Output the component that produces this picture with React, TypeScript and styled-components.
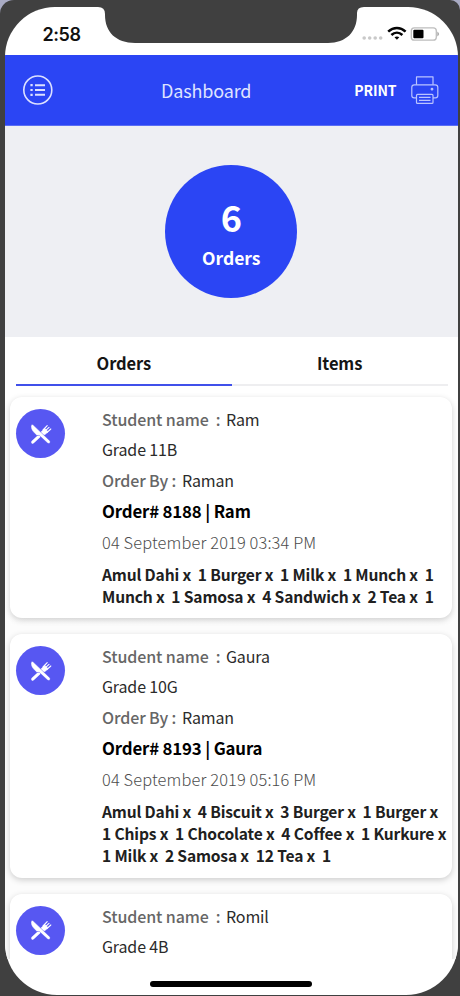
import React from "react";
import styled, { createGlobalStyle } from "styled-components";

const GlobalStyle = createGlobalStyle`
  * { box-sizing: border-box; }
  html, body { margin: 0; padding: 0; }
  body {
    width: 460px;
    height: 996px;
    overflow: hidden;
    background: #a9abc4;
    font-family: "Noto Sans CJK SC", "Noto Sans", sans-serif;
    color: #1c1c1c;
  }
`;

const Device = styled.div`
  position: relative;
  width: 460px;
  height: 996px;
  padding: 7px 2.5px 1px 5px;
  background: #404040;
  border-radius: 14px 10px 0 0;
`;

const Screen = styled.main`
  height: 988px;
  display: flex;
  flex-direction: column;
  overflow: hidden;
  background: #fff;
  border-radius: 50px 50px 52px 52px;
`;

const Notch = styled.svg`
  position: absolute;
  left: 98px;
  top: 5px;
  display: block;
`;

const HomeIndicator = styled.div`
  position: absolute;
  left: 150px;
  bottom: 9px;
  width: 162px;
  height: 6px;
  border-radius: 3px;
  background: #000;
`;

const StatusBar = styled.div`
  flex: none;
  height: 48px;
  display: flex;
  align-items: center;
  justify-content: space-between;
  padding: 6px 18px 0 37.5px;
`;

const Clock = styled.span`
  margin-top: 1px;
  font: 600 18px/22px Inter, "Liberation Sans", sans-serif;
  letter-spacing: -0.45px;
  color: #111;
`;

const StatusIcons = styled.div`
  display: flex;
  align-items: center;
`;

const Header = styled.header`
  flex: none;
  height: 71px;
  display: grid;
  grid-template-columns: 139px 1fr auto;
  align-items: center;
  padding: 0 19px 0 17px;
  background: #2b45f4;
  border-bottom: 1px solid #5a6ef4;
  color: #fff;
`;

const Title = styled.h1`
  margin: 0;
  font-size: 18px;
  font-weight: 400;
  line-height: 26px;
  letter-spacing: -0.15px;
  color: #dfe3ff;
`;

const IconButton = styled.button`
  display: flex;
  width: 32px;
  padding: 0;
  border: 0;
  background: none;
`;

const PrintButton = styled.button`
  display: flex;
  align-items: center;
  gap: 14px;
  padding: 0;
  border: 0;
  background: none;
  color: #fff;
  font: 700 14px/20px "Noto Sans CJK SC", sans-serif;
  letter-spacing: -0.1px;
`;

const Summary = styled.section`
  flex: none;
  height: 211px;
  display: flex;
  align-items: center;
  justify-content: center;
  padding-bottom: 1px;
  background: #eeeff3;
`;

const Badge = styled.div`
  width: 132px;
  height: 133px;
  display: flex;
  flex-direction: column;
  align-items: center;
  padding-top: 28px;
  border-radius: 50%;
  background: #2b45f4;
  color: #fff;
  font-weight: 700;
`;

const Count = styled.span`
  font-size: 36px;
  line-height: 46px;
`;

const CountLabel = styled.span`
  margin-top: 7px;
  font-size: 17.5px;
  line-height: 24px;
`;

const Tabs = styled.nav`
  flex: none;
  display: grid;
  grid-template-columns: 1fr 1fr;
  height: 49px;
  padding: 0 10px 0 11px;
`;

const Tab = styled.button<{ $active?: boolean }>`
  padding: 5px 0 0;
  border: 0;
  border-bottom: 2px solid ${(p) => (p.$active ? "#4050ea" : "#eeeef0")};
  background: none;
  color: #151515;
  font: 700 16.5px/24px "Noto Sans CJK SC", sans-serif;
  letter-spacing: -0.1px;
`;

const List = styled.section`
  flex: 1;
  min-height: 0;
  overflow: hidden;
  display: flex;
  flex-direction: column;
  gap: 16px;
  margin-bottom: 36px;
  padding: 11px 5.5px 0 5px;
  background: linear-gradient(#fff 200px, #fcfcfc 240px);
`;

const Card = styled.article<{ $height: number }>`
  flex: none;
  height: ${(p) => p.$height}px;
  display: grid;
  grid-template-columns: 86px 1fr;
  padding: 7px 0 10px 6px;
  border-radius: 12px;
  background: #fff;
  box-shadow: 0 2px 6px rgba(0, 0, 0, 0.19);
`;

const Avatar = styled.div`
  width: 49px;
  height: 49px;
  margin-top: 5px;
  display: flex;
  align-items: center;
  justify-content: center;
  border-radius: 50%;
  background: #5757f2;
`;

const Details = styled.div`
  display: flex;
  flex-direction: column;
  white-space: pre;
`;

const Field = styled.div`
  display: flex;
  height: 30.3px;
  align-items: center;
  font-size: 16px;
  line-height: 24px;
  letter-spacing: -0.15px;
  color: #2b2b2b;
`;

const FieldLabel = styled.span<{ $width: number }>`
  width: ${(p) => p.$width}px;
  font-weight: 500;
  letter-spacing: -0.1px;
  color: #666;
`;

const OrderTitle = styled.h2`
  margin: 0;
  font-size: 16.8px;
  font-weight: 700;
  line-height: 32px;
  letter-spacing: -0.15px;
  color: #000;
`;

const OrderDate = styled.time`
  font-size: 16.4px;
  font-weight: 300;
  line-height: 31px;
  letter-spacing: 0.13px;
  color: #4c4c4c;
`;

const Items = styled.div`
  margin-top: 5px;
  font-size: 15.6px;
  font-weight: 700;
  line-height: 22px;
  letter-spacing: -0.16px;
  color: #202020;
`;

const MenuIcon = () => (
  <svg width="32" height="32" viewBox="0 0 32 32" fill="none" stroke="#dce0ff" strokeWidth="1.6">
    <circle cx="15.8" cy="16" r="14" />
    <path d="M13 11.2h10M13 16h10M13 20.8h10" strokeWidth="2" />
    <path d="M8.4 11.2h2.3M8.4 16h2.3M8.4 20.8h2.3" strokeWidth="2.2" />
  </svg>
);

const PrinterIcon = () => (
  <svg width="28" height="30" viewBox="0 0 28 30" fill="none" stroke="#bac4ff" strokeWidth="1.2" strokeLinejoin="round">
    <path d="M5.5 9.8V1.8h16.5v8" />
    <path d="M5.5 22.9H3.2Q.8 22.9.8 20.5v-8.2q0-2.5 2.5-2.5h20.9q2.6 0 2.6 2.5v8.2q0 2.4-2.4 2.4H22" />
    <rect x="5.5" y="19.4" width="16.5" height="9" rx="1" />
    <path d="M8 22.4h11.5M8 25.4h11.5" />
    <circle cx="21" cy="14.2" r=".8" fill="#dce0ff" />
  </svg>
);

const CutleryIcon = () => (
  <svg width="22" height="22" viewBox="0 0 22 22" fill="none" stroke="#fff" strokeLinecap="round">
    <path d="M2.7 19.2 13.5 9.2" strokeWidth="3" />
    <path d="M11.8 8.2 15 5.4l3.1 3.3-3 2.7q-1.8.9-3.2-.5-1.2-1.4-.1-2.7Z" fill="#fff" strokeWidth=".5" />
    <path d="m13 7 4.2-4.3M15.2 7.9l3.8-3.6M16.9 9.7l3.9-3.7" strokeWidth="1.1" />
    <path d="M1.3 1.6C.4 4.3 1.1 7 3.8 9.6l3 2.9 2.5-.1 8.2 7.7c1.8 1.2 3.6-.6 2.3-2.3L3.1 1.8Q1.8.6 1.3 1.6Z" fill="#fff" stroke="#5757f2" strokeWidth=".5" />
  </svg>
);

const StatusGlyphs = () => (
  <svg width="78" height="18" viewBox="0 0 78 18" fill="none">
    <g fill="#c9c9c9">
      <circle cx="2.2" cy="13" r="1.8" />
      <circle cx="7.7" cy="13" r="1.8" />
      <circle cx="13.2" cy="13" r="1.8" />
      <circle cx="18.7" cy="13" r="1.8" />
    </g>
    <g stroke="#050505" strokeWidth="2.5">
      <path d="M26.2 6.6c5.3-4.9 12.1-4.9 17.4 0" />
      <path d="M29.4 10c3.3-3.1 7.7-3.1 11 0" />
    </g>
    <path d="m34.9 14.8-2.4-2.5c1.3-1.2 3.5-1.2 4.8 0Z" fill="#050505" />
    <rect x="49.3" y="2.8" width="25" height="12.4" rx="3" stroke="#bdbdbd" strokeWidth="1.3" />
    <rect x="51.3" y="4.7" width="10.2" height="8.6" rx="1" fill="#000" />
    <path d="M75.3 6.4q3.6 2.5 0 5Z" fill="#aaa" />
  </svg>
);

type Order = {
  student: string;
  grade: string;
  by?: string;
  title?: string;
  date?: string;
  items: string[];
  height: number;
};

const orders: Order[] = [
  {
    student: "Ram",
    grade: "Grade 11B",
    by: "Raman",
    title: "Order# 8188 | Ram",
    date: "04 September 2019 03:34 PM",
    items: [
      "Amul Dahi x  1 Burger x  1 Milk x  1 Munch x  1",
      "Munch x  1 Samosa x  4 Sandwich x  2 Tea x  1",
    ],
    height: 221,
  },
  {
    student: "Gaura",
    grade: "Grade 10G",
    by: "Raman",
    title: "Order# 8193 | Gaura",
    date: "04 September 2019 05:16 PM",
    items: [
      "Amul Dahi x  4 Biscuit x  3 Burger x  1 Burger x",
      "1 Chips x  1 Chocolate x  4 Coffee x  1 Kurkure x",
      "1 Milk x  2 Samosa x  12 Tea x  1",
    ],
    height: 243.5,
  },
  { student: "Romil", grade: "Grade 4B", items: [], height: 221 },
];

const OrderCard = ({ order }: { order: Order }) => (
  <Card $height={order.height}>
    <Avatar>
      <CutleryIcon />
    </Avatar>
    <Details>
      <Field>
        <FieldLabel $width={124}>{"Student name  :"}</FieldLabel>
        {order.student}
      </Field>
      <Field>{order.grade}</Field>
      {order.by && (
        <Field>
          <FieldLabel $width={80}>Order By :</FieldLabel>
          {order.by}
        </Field>
      )}
      {order.title && <OrderTitle>{order.title}</OrderTitle>}
      {order.date && <OrderDate>{order.date}</OrderDate>}
      {order.items.length > 0 && (
        <Items>
          {order.items.map((line) => (
            <div key={line}>{line}</div>
          ))}
        </Items>
      )}
    </Details>
  </Card>
);

export default function App() {
  return (
    <>
      <GlobalStyle />
      <Device>
        <Screen>
          <StatusBar>
            <Clock>2:58</Clock>
            <StatusIcons>
              <StatusGlyphs />
            </StatusIcons>
          </StatusBar>
          <Header>
            <IconButton aria-label="Menu">
              <MenuIcon />
            </IconButton>
            <Title>Dashboard</Title>
            <PrintButton>
              PRINT
              <PrinterIcon />
            </PrintButton>
          </Header>
          <Summary>
            <Badge>
              <Count>6</Count>
              <CountLabel>Orders</CountLabel>
            </Badge>
          </Summary>
          <Tabs>
            <Tab $active>Orders</Tab>
            <Tab>Items</Tab>
          </Tabs>
          <List>
            {orders.map((order) => (
              <OrderCard key={order.student} order={order} />
            ))}
          </List>
        </Screen>
        <Notch width="266" height="39" viewBox="0 0 266 39">
          <path d="M0 0V2Q7 2 7 9V10C7 27 18 38 37 38H230C248 38 259 27 259 10V8Q259 2 266 2V0Z" fill="#404040" />
        </Notch>
        <HomeIndicator />
      </Device>
    </>
  );
}
